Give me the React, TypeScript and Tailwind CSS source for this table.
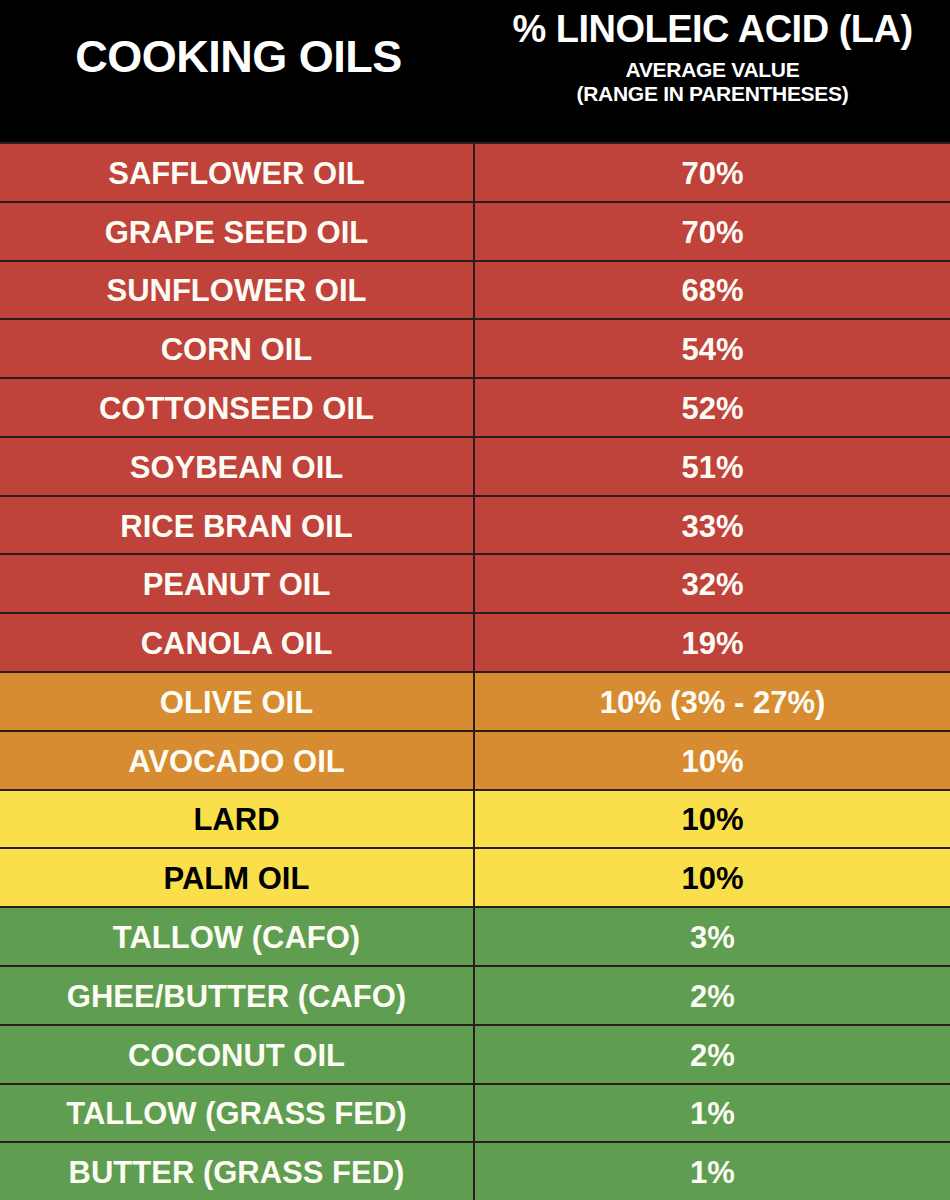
const rows: { name: string; value: string; tone: 'red' | 'orange' | 'yellow' | 'green' }[] = [
  { name: 'SAFFLOWER OIL', value: '70%', tone: 'red' },
  { name: 'GRAPE SEED OIL', value: '70%', tone: 'red' },
  { name: 'SUNFLOWER OIL', value: '68%', tone: 'red' },
  { name: 'CORN OIL', value: '54%', tone: 'red' },
  { name: 'COTTONSEED OIL', value: '52%', tone: 'red' },
  { name: 'SOYBEAN OIL', value: '51%', tone: 'red' },
  { name: 'RICE BRAN OIL', value: '33%', tone: 'red' },
  { name: 'PEANUT OIL', value: '32%', tone: 'red' },
  { name: 'CANOLA OIL', value: '19%', tone: 'red' },
  { name: 'OLIVE OIL', value: '10% (3% - 27%)', tone: 'orange' },
  { name: 'AVOCADO OIL', value: '10%', tone: 'orange' },
  { name: 'LARD', value: '10%', tone: 'yellow' },
  { name: 'PALM OIL', value: '10%', tone: 'yellow' },
  { name: 'TALLOW (CAFO)', value: '3%', tone: 'green' },
  { name: 'GHEE/BUTTER (CAFO)', value: '2%', tone: 'green' },
  { name: 'COCONUT OIL', value: '2%', tone: 'green' },
  { name: 'TALLOW (GRASS FED)', value: '1%', tone: 'green' },
  { name: 'BUTTER (GRASS FED)', value: '1%', tone: 'green' },
];

const toneClass = {
  red: 'bg-[#bf423b] text-[#fdfcf4]',
  orange: 'bg-[#d78c31] text-[#fdfcf4]',
  yellow: 'bg-[#f9df4a] text-black',
  green: 'bg-[#5f9d50] text-[#fdfcf4]',
};

export default function App() {
  return (
    <div className="w-[950px] h-[1200px] flex flex-col bg-black font-['Liberation_Sans',Arial,sans-serif] font-bold overflow-hidden">
      <div className="h-[142px] shrink-0 grid grid-cols-2 text-white">
        <div className="flex items-center justify-center pb-[30px] pl-[2px]">
          <span className="text-[45px] leading-none tracking-[-0.5px]">COOKING OILS</span>
        </div>
        <div className="flex flex-col items-center pt-[10px] leading-none">
          <span className="text-[38px] tracking-[-0.5px]">% LINOLEIC ACID (LA)</span>
          <span className="text-[21px] mt-[11px] tracking-[-0.3px]">AVERAGE VALUE</span>
          <span className="text-[21px] mt-[3px] tracking-[-0.3px]">(RANGE IN PARENTHESES)</span>
        </div>
      </div>
      {rows.map((r) => (
        <div
          key={r.name}
          className={`flex-1 grid grid-cols-2 border-t-2 border-[#2b1d1a] ${toneClass[r.tone]}`}
        >
          <div className="flex items-center justify-center border-r-2 border-[#2b1d1a] text-[31px] leading-none pt-[2px]">
            {r.name}
          </div>
          <div className="flex items-center justify-center text-[31px] leading-none pt-[2px]">
            {r.value}
          </div>
        </div>
      ))}
    </div>
  );
}
